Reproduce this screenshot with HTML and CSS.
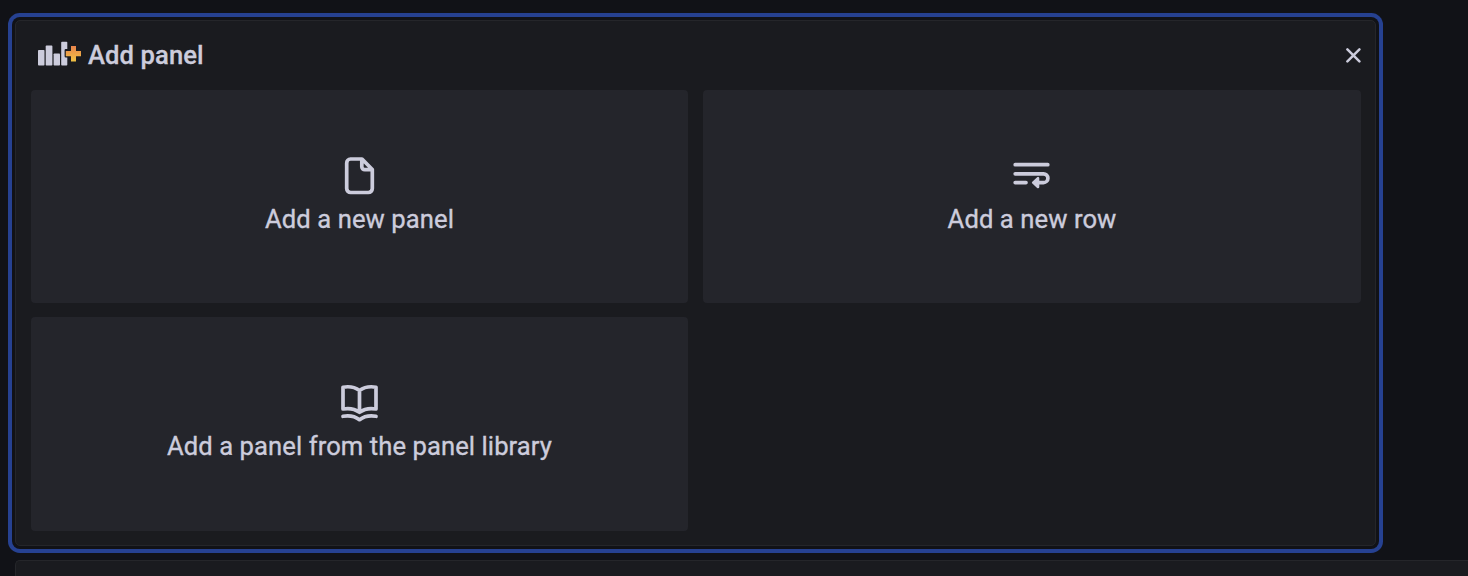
FILE: index.html
```html
<!DOCTYPE html>
<html lang="en">
<head>
<meta charset="utf-8">
<title>Add panel</title>
<link rel="stylesheet" href="styles.css">
</head>
<body>
<main class="dashboard">
  <section class="panel">
    <header class="panel-header">
      <svg class="logo" width="44" height="26" viewBox="0 0 44 26">
        <defs><linearGradient id="plus" x1="0" y1="0" x2="0" y2="1"><stop offset="0" stop-color="#e8844d"/><stop offset="1" stop-color="#f0c243"/></linearGradient></defs>
        <g fill="#ccccdc">
          <rect x="0" y="9" width="6.500" height="15.500" rx=".8"/>
          <rect x="7.700" y="4.600" width="6.700" height="19.900" rx=".8"/>
          <rect x="15.600" y="12.500" width="6.400" height="12" rx=".8"/>
          <path d="M24 .8h4.500a.8.8 0 0 1 .8.8V7.900h-1.500a1.200 1.200 0 0 0-1.200 1.200v6.200a1.200 1.200 0 0 0 1.200 1.200h1.500v7.200a.8.8 0 0 1-.8.8H24a.8.8 0 0 1-.8-.8V1.600A.8.8 0 0 1 24 .8Z"/>
        </g>
        <path fill="url(#plus)" d="M33 5h5v5h5v5.200h-5v5.300h-5v-5.300h-5.200V10H33Z"/>
      </svg>
      <h1 class="title">Add panel</h1>
      <button class="close" aria-label="Close"><svg width="16" height="16" viewBox="0 0 16 16"><path class="line" d="M2.400 2.400 14.400 14.400M14.400 2.400 2.400 14.400"/></svg></button>
    </header>
    <div class="actions">
      <button class="card">
        <svg class="icon" width="44" height="44" viewBox="0.500 0.500 44 44"><path class="line" d="M12.800 5.500H24.500L34.800 16V35a4 4 0 0 1-4 4H13.200a4 4 0 0 1-4-4V9.500a4 4 0 0 1 3.800-4ZM24.300 6.300V13.200a3 3 0 0 0 3 3H34.300"/></svg>
        <span class="label">Add a new panel</span>
      </button>
      <button class="card">
        <svg class="icon" width="44" height="44" viewBox="0.500 0 44 44"><path class="line" d="M5.700 10.700H38.300M5.700 19.800H34a4.400 4.400 0 0 1 0 8.800H28M5.700 28.600H16.500"/><path class="head" d="M28.500 24.200v8.800L23.700 28.600Z"/></svg>
        <span class="label">Add a new row</span>
      </button>
      <button class="card">
        <svg class="icon" width="44" height="44" viewBox="0.500 0.500 44 44"><path class="line" d="M22 10C17.500 6.700 11.500 5.600 5.500 6.700V28.500C11.500 27.400 17.500 28.500 22 31.800 26.500 28.500 32.500 27.400 38.500 28.500V6.700C32.500 5.600 26.500 6.700 22 10ZM22 10V31M5.500 35.800C11.500 34.700 17.500 35.800 22 39.200 26.500 35.800 32.500 34.700 38.500 35.800"/></svg>
        <span class="label">Add a panel from the panel library</span>
      </button>
    </div>
  </section>
  <section class="next-panel"></section>
</main>
</body>
</html>
```
FILE: styles.css
```css
* { box-sizing: border-box; }
body {
  margin: 0;
  background: #111217;
  color: #ccccdc;
  font-family: Roboto, sans-serif;
}
.dashboard {
  display: flex;
  flex-direction: column;
  gap: 14px;
  padding: 20px 0 0 15px;
}
.panel {
  width: 1361px;
  height: 526px;
  padding: 0 14px 0 15px;
  background: #1a1b1f;
  border: 1px solid #25262a;
  border-radius: 5px;
  box-shadow: 0 0 0 3px #111217, 0 0 0 7px #264191;
}
.panel-header {
  display: flex;
  align-items: center;
  height: 69px;
  padding: 0 0 2px 7px;
}
.logo { margin-top: -1px; }
.title {
  margin: 0 0 0 6px;
  font-size: 25.6px;
  font-weight: 500;
  line-height: 40px;
  letter-spacing: 0.1px;
  -webkit-text-stroke: 0.3px #ccccdc;
}
.close {
  display: flex;
  margin-left: auto;
  padding: 0;
  border: 0;
  background: none;
}
.line {
  fill: none;
  stroke: #ccccdc;
  stroke-width: 3.7;
  stroke-linecap: round;
  stroke-linejoin: round;
}
.close .line { stroke-width: 2.5; }
.head {
  fill: #ccccdc;
  stroke: #ccccdc;
  stroke-width: 2.6;
  stroke-linejoin: round;
}
.actions {
  display: grid;
  grid-template-columns: 657px 658px;
  grid-template-rows: 213px 214px;
  gap: 14px 15px;
}
.card {
  display: flex;
  flex-direction: column;
  align-items: center;
  padding: 64px 0 0;
  border: 0;
  border-radius: 4px;
  background: #24252b;
  color: inherit;
  font: inherit;
}
.label {
  margin-top: 1px;
  font-size: 25.6px;
  line-height: 40px;
  letter-spacing: 0.08px;
  -webkit-text-stroke: 0.35px #ccccdc;
}
.next-panel {
  height: 16px;
  background: #1a1b1f;
  border: 1px solid #25262a;
  border-width: 1px 0 0 1px;
  border-radius: 5px 0 0 0;
}
```
